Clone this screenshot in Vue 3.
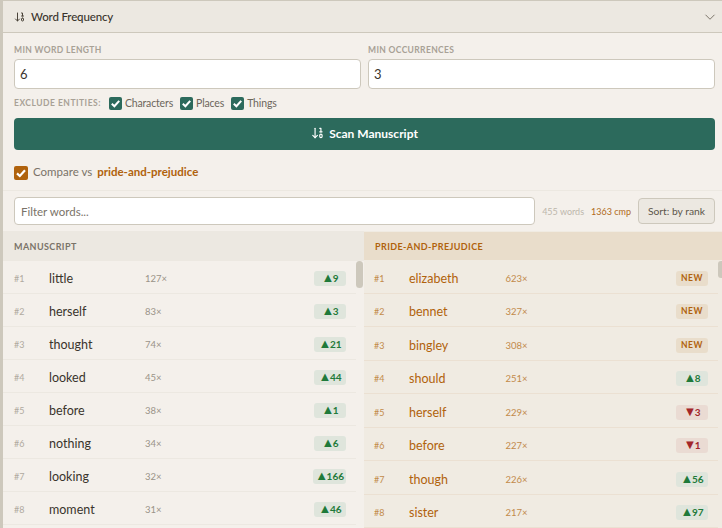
<script setup>
const left = [
  ['little', '127', 'up', '9'], ['herself', '83', 'up', '3'], ['thought', '74', 'up', '21'], ['looked', '45', 'up', '44'],
  ['before', '38', 'up', '1'], ['nothing', '34', 'up', '6'], ['looking', '32', 'up', '166'], ['moment', '31', 'up', '46'],
]
const right = [
  ['elizabeth', '623', 'new', 'NEW'], ['bennet', '327', 'new', 'NEW'], ['bingley', '308', 'new', 'NEW'], ['should', '251', 'up', '8'],
  ['herself', '229', 'down', '3'], ['before', '227', 'down', '1'], ['though', '226', 'up', '56'], ['sister', '217', 'up', '97'],
]
const glyph = { up: '▲', down: '▼', new: '' }
</script>

<template>
  <div class="page">
    <header class="head">
      <svg class="ico" viewBox="0 0 24 24"><path d="m3 16 4 4 4-4"/><path d="M7 20V4"/><path d="M17 10V4h-2"/><path d="M15 10h4"/><rect x="15" y="14" width="4" height="6" ry="2"/></svg>
      <span class="title">Word Frequency</span>
      <svg class="chev" viewBox="0 0 24 24"><path d="m6 9 6 6 6-6"/></svg>
    </header>
    <section class="controls">
      <div class="fields">
        <label class="field"><span class="lab">MIN WORD LENGTH</span><input class="inp" value="6" /></label>
        <label class="field"><span class="lab">MIN OCCURRENCES</span><input class="inp" value="3" /></label>
      </div>
      <div class="excl">
        <span class="lab">EXCLUDE ENTITIES:</span>
        <label class="chk" v-for="n in ['Characters','Places','Things']" :key="n">
          <span class="box"><svg viewBox="0 0 14 14"><path d="M3 7.4 5.8 10 11 4.2"/></svg></span>{{ n }}
        </label>
      </div>
      <button class="scan">
        <svg class="ico w" viewBox="0 0 24 24"><path d="m3 16 4 4 4-4"/><path d="M7 20V4"/><path d="M17 10V4h-2"/><path d="M15 10h4"/><rect x="15" y="14" width="4" height="6" ry="2"/></svg>
        Scan Manuscript
      </button>
      <div class="cmp">
        <span class="box big"><svg viewBox="0 0 14 14"><path d="M3 7.4 5.8 10 11 4.2"/></svg></span>
        <span class="cv">Compare vs</span><b class="cn">pride-and-prejudice</b>
      </div>
    </section>
    <div class="filter">
      <input class="inp finp" placeholder="Filter words..." />
      <span class="cnt">455 words</span>
      <span class="cnt2">1363 cmp</span>
      <button class="sort">Sort: by rank</button>
    </div>
    <div class="cols">
      <div class="col">
        <div class="ch">MANUSCRIPT</div>
        <div class="list">
          <div class="row" v-for="(r,i) in left" :key="r[0]">
            <span class="rk">#{{ i+1 }}</span><span class="wd">{{ r[0] }}</span><span class="ct">{{ r[1] }}×</span>
            <span class="bd" :class="r[2]"><i class="g">{{ glyph[r[2]] }}</i>{{ r[3] }}</span>
          </div>
          <div class="thumb"></div>
        </div>
      </div>
      <div class="col alt">
        <div class="ch">PRIDE-AND-PREJUDICE</div>
        <div class="list">
          <div class="row" v-for="(r,i) in right" :key="r[0]">
            <span class="rk">#{{ i+1 }}</span><span class="wd">{{ r[0] }}</span><span class="ct">{{ r[1] }}×</span>
            <span class="bd" :class="r[2]"><i class="g">{{ glyph[r[2]] }}</i>{{ r[3] }}</span>
          </div>
          <div class="thumb"></div>
        </div>
      </div>
    </div>
  </div>
</template>

<style>
html, body { margin: 0; overflow: hidden; background: #f4f0eb; }
</style>
<style scoped>
.page { width: 722px; height: 528px; box-sizing: border-box; border-left: 3px solid #cdc8bc; border-top: 1px solid #cdc8bc; background: #f4f0eb; font-family: Lato, "Noto Sans", sans-serif; overflow: hidden; color: #3a342c; display: flex; flex-direction: column; }
.head { height: 32px; box-sizing: border-box; flex: none; display: flex; align-items: center; padding: 0 11px; background: #ece8e1; border-bottom: 1px solid #cdc8bc; }
.ico { width: 12px; height: 12px; fill: none; stroke: #4a4339; stroke-width: 2; stroke-linecap: round; stroke-linejoin: round; }
.ico.w { width: 14px; height: 14px; stroke: #fff; }
.title { margin-left: 5px; font-size: 11.5px; letter-spacing: -.15px; font-weight: 500; color: #3a342c; }
.chev { margin-left: auto; margin-right: -8px; width: 18px; height: 18px; fill: none; stroke: #7a7368; stroke-width: 1.3; }
.controls { flex: none; padding: 11px 7px 0 11px; }
.fields { display: flex; gap: 7px; }
.field { flex: 1; display: flex; flex-direction: column; gap: 3px; }
.lab { font-size: 8.5px; line-height: 12px; font-weight: 700; letter-spacing: .35px; color: #a8a196; white-space: nowrap; }
.inp { box-sizing: border-box; width: 100%; height: 30px; border: 1px solid #cdc8bc; border-radius: 4px; background: #fff; padding: 0 5px; font: 13px Lato, sans-serif; color: #3a342c; outline: none; }
.excl { display: flex; align-items: center; margin-top: 6px; height: 16px; }
.excl .lab { margin-right: 8px; letter-spacing: .5px; }
.chk { display: flex; align-items: center; gap: 3px; margin-right: 7px; font-size: 10.5px; letter-spacing: -.15px; color: #6d665b; }
.box { width: 13px; height: 13px; border-radius: 2px; background: #2c6a5c; display: inline-flex; }
.box svg { width: 100%; height: 100%; fill: none; stroke: #fff; stroke-width: 2.2; }
.scan { display: flex; align-items: center; justify-content: center; gap: 4px; width: 100%; height: 32px; margin-top: 7px; padding: 0 0 2px; border: 0; border-radius: 4px; background: #2c6a5c; color: #fff; font: 700 12px Lato, sans-serif; }
.cmp { display: flex; align-items: center; margin-top: 16px; height: 14px; font-size: 11.5px; }
.box.big { background: #b0620c; width: 14px; height: 14px; margin-right: 5px; }
.cv { color: #7a7368; margin-top: -3px; }
.cn { margin-left: 5px; margin-top: -3px; color: #b0620c; font-weight: 700; }
.filter { flex: none; display: flex; align-items: center; height: 41px; margin-top: 10px; box-sizing: border-box; padding: 0 7px 0 11px; border-top: 1px solid #ece8e1; }
.finp { flex: 1; width: auto; height: 28px; font-size: 11.5px; padding: 0 6px; }
.finp::placeholder { color: #7a7368; }
.cnt { margin-left: 7px; font-size: 9px; color: #bdb7ac; }
.cnt2 { margin-left: 7px; font-size: 9px; color: #b06a20; }
.sort { margin-left: 7px; width: 77px; height: 26px; padding: 0; border: 1px solid #cdc8bc; border-radius: 4px; background: #ece8e1; font: 10.3px Lato, sans-serif; color: #5d564b; }
.cols { flex: 1; display: flex; min-height: 0; background: #f4f0eb; }
.col { width: 361px; flex: none; display: flex; flex-direction: column; }
.col.alt { width: 358px; background: #f0ebe2; }
.ch { flex: none; height: 30px; line-height: 32px; padding-left: 11px; background: #ece8e1; font-size: 9px; font-weight: 700; letter-spacing: .4px; color: #7a7368; }
.alt .ch { height: 28px; line-height: 30px; margin-top: 1px; background: #e9ddcb; color: #b0620c; }
.list { position: relative; flex: 1; overflow: hidden; }
.row { box-sizing: border-box; height: 33px; display: flex; align-items: center; margin-right: 8px; padding: 2px 10px 0 11px; border-bottom: 1px solid #ece8e1; }
.alt .row { height: 33.5px; padding: 4px 10px 0; margin-right: 4px; border-bottom-color: #ebe0d2; }
.rk { width: 35px; font-size: 9px; color: #b0aa9f; }
.wd { width: 96px; font-size: 12.5px; color: #3a342c; }
.alt .wd { width: 96.5px; color: #b0620c; }
.ct { font-size: 9.5px; color: #9a9388; }
.alt .rk, .alt .ct { color: #c28a4a; }
.bd { margin-left: auto; box-sizing: border-box; height: 15px; line-height: 15px; padding: 0 2px; min-width: 32px; text-align: center; border-radius: 3px; font-size: 10px; font-weight: 700; }
.g { font-style: normal; font-size: 13px; letter-spacing: -1.5px; line-height: 0; }
.up { background: #dfe5dc; color: #1f7a3a; }
.down { background: #eadbd3; color: #a3262a; }
.new { background: #e9ddcb; color: #b0620c; font-size: 8.5px; letter-spacing: .6px; }
.thumb { position: absolute; top: 0; right: 1px; width: 7px; height: 27px; border-radius: 3.5px; background: #cdc8bc; }
.alt .thumb { right: 0; width: 4px; height: 17px; top: 1px; border-radius: 3px 0 0 3px; }
</style>
